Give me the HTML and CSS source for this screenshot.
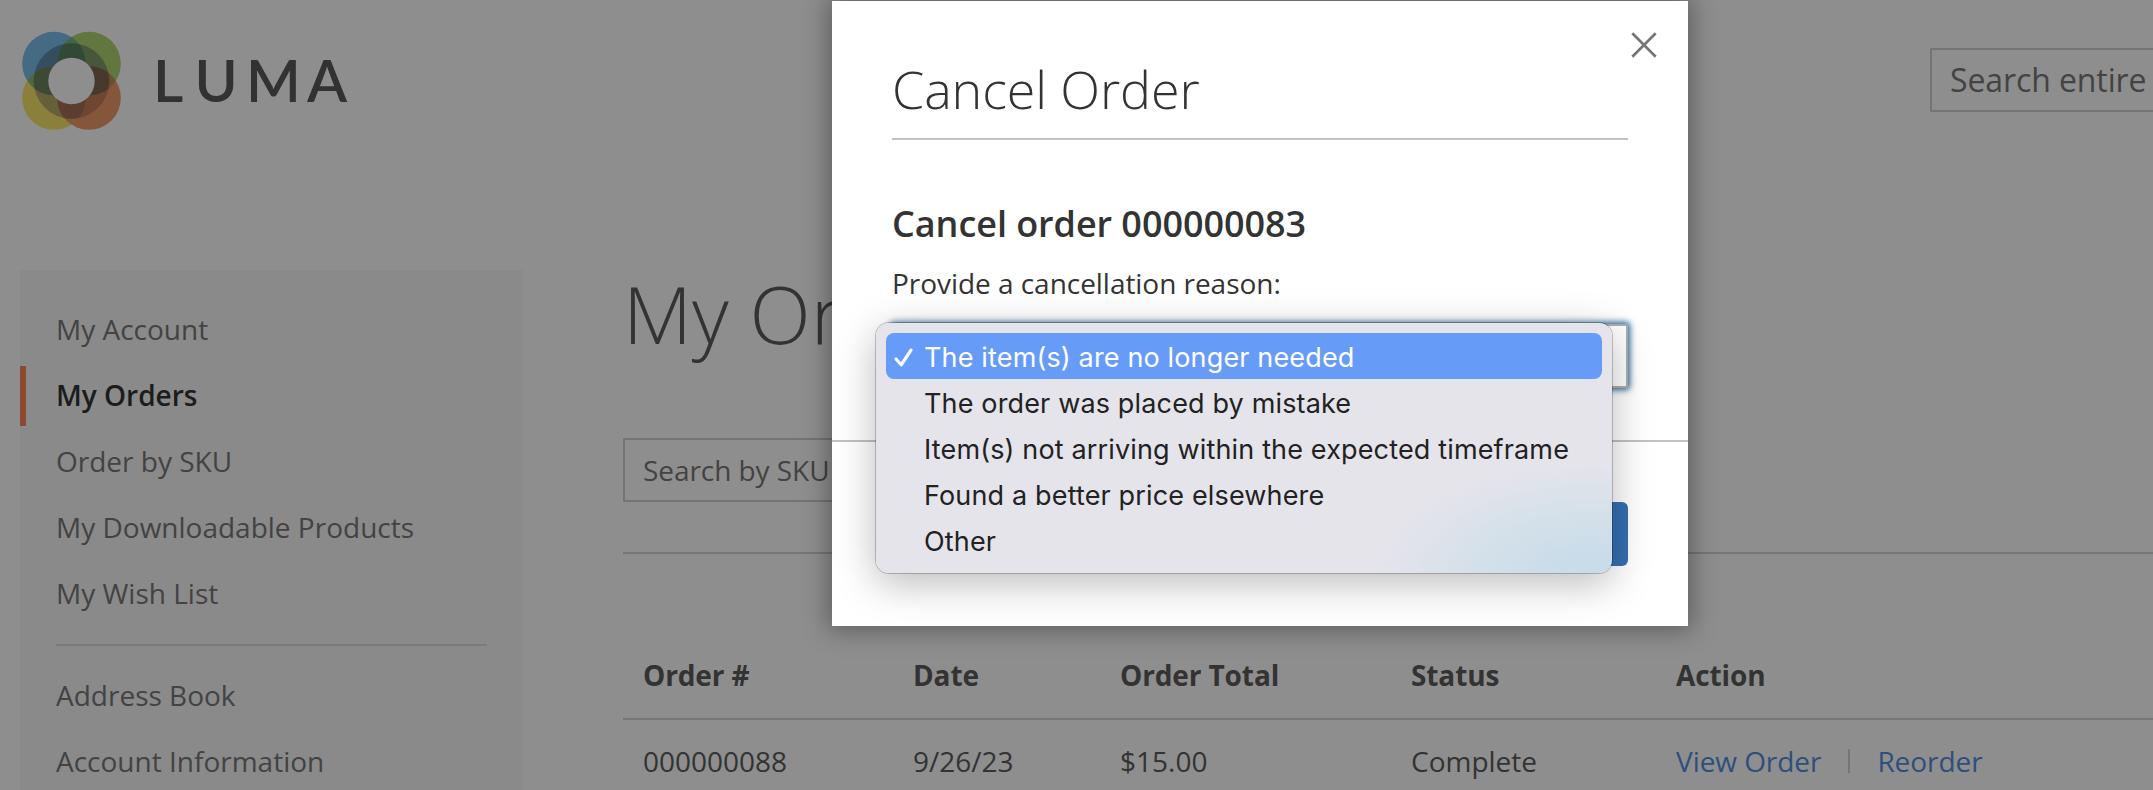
FILE: index.html
```
<!DOCTYPE html>
<html lang="en">
<head>
<meta charset="utf-8">
<title>My Orders</title>
<link rel="stylesheet" href="styles.css">
</head>
<body>
<div class="page">
  <header class="header">
    <a class="logo">
      <svg width="340" height="110" viewBox="20 26 340 110">
        <defs>
          <clipPath id="blue"><circle cx="54" cy="63.6" r="31.8"/></clipPath>
          <clipPath id="orange"><circle cx="89" cy="98" r="31.8"/></clipPath>
          <clipPath id="ring"><circle cx="71.5" cy="81" r="37.8"/></clipPath>
        </defs>
        <circle cx="54" cy="63.6" r="31.8" fill="#446b83"/>
        <circle cx="89" cy="63.6" r="31.8" fill="#61773f"/>
        <circle cx="54" cy="98" r="31.8" fill="#8b803b"/>
        <circle cx="89" cy="98" r="31.8" fill="#85563c"/>
        <g clip-path="url(#blue)">
          <circle cx="89" cy="63.6" r="31.8" fill="#3f6746"/>
          <circle cx="54" cy="98" r="31.8" fill="#4d683c"/>
        </g>
        <g clip-path="url(#orange)">
          <circle cx="89" cy="63.6" r="31.8" fill="#6a4f31"/>
          <circle cx="54" cy="98" r="31.8" fill="#7d5b35"/>
        </g>
        <g clip-path="url(#ring)">
          <circle cx="54" cy="63.6" r="31.8" fill="#344e5f"/>
          <circle cx="89" cy="63.6" r="31.8" fill="#48573a"/>
          <circle cx="54" cy="98" r="31.8" fill="#66603a"/>
          <circle cx="89" cy="98" r="31.8" fill="#6f4731"/>
          <g clip-path="url(#blue)">
            <circle cx="89" cy="63.6" r="31.8" fill="#304a37"/>
            <circle cx="54" cy="98" r="31.8" fill="#3c4a35"/>
          </g>
          <g clip-path="url(#orange)">
            <circle cx="89" cy="63.6" r="31.8" fill="#463a2c"/>
            <circle cx="54" cy="98" r="31.8" fill="#5e3d30"/>
          </g>
        </g>
        <circle cx="71.5" cy="81" r="23.2" fill="#8e8e8e"/>
        <text class="wordmark" x="153 194.500 246 307" y="101.500">LUMA</text>
      </svg>
    </a>
    <div class="field site-search">Search entire</div>
  </header>
  <div class="columns">
    <nav class="sidebar">
      <ul class="nav">
        <li>My Account</li>
        <li class="current">My Orders</li>
        <li>Order by SKU</li>
        <li>My Downloadable Products</li>
        <li>My Wish List</li>
        <li class="divider"></li>
        <li>Address Book</li>
        <li>Account Information</li>
      </ul>
    </nav>
    <main class="main">
      <h1 class="title">My Orders</h1>
      <div class="field sku-search">Search by SKU</div>
      <div class="orders">
        <div class="row head"><span>Order #</span><span>Date</span><span>Order Total</span><span>Status</span><span>Action</span></div>
        <div class="row"><span>000000088</span><span>9/26/23</span><span>$15.00</span><span>Complete</span><span class="actions"><a>View Order</a><i class="sep"></i><a>Reorder</a></span></div>
      </div>
    </main>
  </div>
</div>

<section class="modal">
  <svg class="close" width="28" height="28" viewBox="0 0 28 28"><path d="M2.300 2.300 25.700 25.700M25.700 2.300 2.300 25.700"/></svg>
  <div class="modal-body">
    <h2 class="modal-title">Cancel Order</h2>
    <h3 class="modal-sub">Cancel order 000000083</h3>
    <p class="label">Provide a cancellation reason:</p>
    <div class="select"></div>
  </div>
  <footer class="modal-foot"><div class="confirm"></div></footer>
  <ul class="menu">
    <li class="selected"><svg class="check" width="22" height="22" viewBox="0 0 22 22"><path d="M3 12 8.200 17.800 18 3.200"/></svg>The item(s) are no longer needed</li>
    <li>The order was placed by mistake</li>
    <li>Item(s) not arriving within the expected timeframe</li>
    <li>Found a better price elsewhere</li>
    <li>Other</li>
  </ul>
</section>
</body>
</html>
```

FILE: styles.css
```
* { box-sizing: border-box; margin: 0; padding: 0; }
body {
  height: 790px;
  overflow: hidden;
  position: relative;
  background: #8e8e8e;
  color: #333;
  font: 28px/40px "Open Sans", sans-serif;
}
ul { list-style: none; }

.page { height: 790px; overflow: hidden; }
.header { display: flex; justify-content: space-between; height: 269px; padding: 26px 0 0 20px; }
.logo { height: 110px; }
.wordmark { font: 600 58.500px Lato, sans-serif; fill: #323232; }
.field {
  height: 64px;
  padding-left: 18px;
  border: 2px solid #747474;
  border-right: 0;
  border-radius: 2px 0 0 2px;
  color: #434343;
  line-height: 60px;
  white-space: nowrap;
}
.site-search { width: 223px; margin-top: 22px; font-size: 32px; letter-spacing: -.1px; }

.columns { display: flex; padding-left: 20px; }
.sidebar { width: 503px; height: 540px; margin-top: 1px; padding-top: 26px; background: #8a8a8a; }
.nav li { height: 66px; padding-left: 36px; color: #434343; line-height: 66px; }
.nav .current { position: relative; color: #1c1c1c; font-weight: 600; }
.nav .current::before { content: ""; position: absolute; left: 0; top: 4px; width: 6px; height: 60px; background: #8c4a2f; }
.nav .divider { height: 2px; margin: 18px 36px 16px; background: #7b7b7b; }

.main { flex: 1; margin-left: 100px; }
.title { height: 88px; font-size: 80px; line-height: 88px; font-weight: 300; }
.sku-search { width: 600px; margin-top: 81px; letter-spacing: -.06px; }
.orders { margin-top: 50px; padding-top: 78px; border-top: 2px solid #767676; }
.row { display: grid; grid-template-columns: 270px 207px 291px 265px 1fr; height: 84px; line-height: 82px; }
.row > span { padding-left: 20px; white-space: nowrap; }
.head { height: 88px; border-bottom: 2px solid #767676; line-height: 86px; font-weight: 700; letter-spacing: -.12px; }
.actions { display: flex; align-items: center; height: 82px; color: #2f4f7b; letter-spacing: -.06px; }
.sep { width: 2px; height: 24px; margin: 0 27px; background: #757575; }

.modal {
  position: absolute;
  left: 832px;
  top: 1px;
  width: 856px;
  height: 625px;
  background: #fff;
  box-shadow: 0 0 24px 4px rgba(0, 0, 0, .35);
}
.close { position: absolute; left: 798px; top: 30px; fill: none; stroke: #757575; stroke-width: 2.700px; }
.modal-body { height: 441px; padding: 52px 60px 0; border-bottom: 2px solid #c1c1c1; }
.modal-title { height: 87px; border-bottom: 2px solid #c1c1c1; font-size: 52px; line-height: 71px; font-weight: 300; letter-spacing: -.1px; }
.modal-sub { margin-top: 60px; font-size: 36px; line-height: 48px; font-weight: 600; letter-spacing: -.06px; }
.label { margin-top: 15px; letter-spacing: -.04px; }
.select { height: 64px; margin-top: 21px; border: 2px solid #adadad; border-radius: 2px; background: #fff; box-shadow: 0 0 6px 2px #2c6897; }
.modal-foot { display: flex; justify-content: flex-end; padding: 60px 60px 0; }
.confirm { width: 220px; height: 64px; border-radius: 6px; background: #356fb1; }
.menu {
  position: absolute;
  left: 44px;
  top: 322px;
  width: 736px;
  height: 250px;
  padding: 10px;
  border-radius: 13px;
  background: radial-gradient(ellipse 215px 112px at 715px 252px, #c9dcea 15%, #d6e1e9 60%, #e0e3eb 85%, #e5e4eb 100%);
  box-shadow: 0 0 0 1px rgba(0, 0, 0, .22), 0 10px 40px rgba(0, 0, 0, .28);
  color: #222;
  font-family: Inter, sans-serif;
  font-size: 27px;
  letter-spacing: .15px;
}
.menu li { position: relative; height: 46px; padding: 1px 0 0 38px; line-height: 47px; white-space: nowrap; }
.menu .selected { border-radius: 8px; background: #679bf8; color: #fff; }
.check { position: absolute; left: 7px; top: 14px; fill: none; stroke: #fff; stroke-width: 3.200px; stroke-linecap: round; stroke-linejoin: round; }
```
